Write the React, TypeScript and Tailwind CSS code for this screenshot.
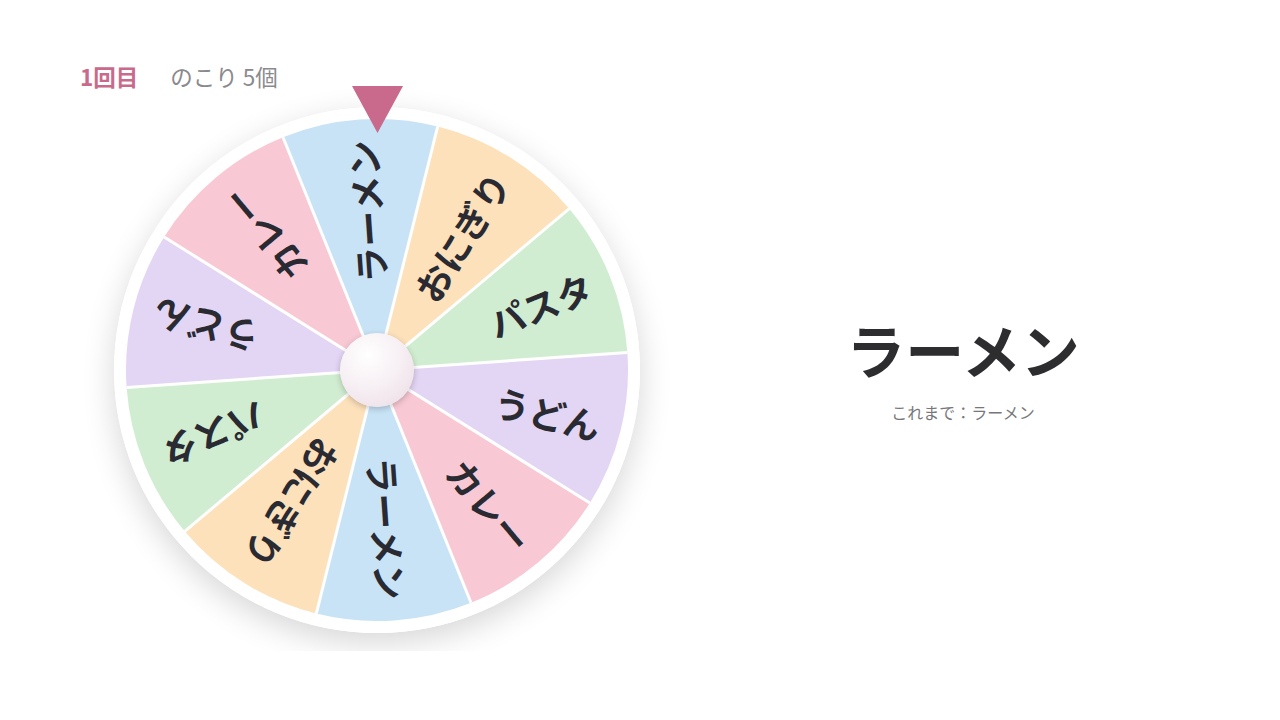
import React from 'react';

const ITEMS = [
  { label: 'ラーメン', color: '#c8e3f6' },
  { label: 'おにぎり', color: '#fde1ba' },
  { label: 'パスタ', color: '#d1edd1' },
  { label: 'うどん', color: '#e3d5f4' },
  { label: 'カレー', color: '#f8c9d5' },
];

const R = 251;
const OFFSET = -4;

const pt = (r: number, deg: number) => {
  const a = (deg * Math.PI) / 180;
  return [r * Math.sin(a), -r * Math.cos(a)];
};

function Wheel() {
  const segs = [...ITEMS, ...ITEMS];
  return (
    <div className="relative w-[526px] h-[526px] rounded-full shadow-[0_10px_32px_rgba(0,0,0,0.16)] ml-[34px]">
      <svg width="526" height="526" viewBox="-263 -263 526 526" className="block">
        <circle cx="0" cy="0" r="263" fill="#ffffff" />
        {segs.map((s, i) => {
          const c = OFFSET + i * 36;
          const [x0, y0] = pt(R, c - 18);
          const [x1, y1] = pt(R, c + 18);
          return <path key={'p' + i} d={`M0,0 L${x0},${y0} A${R},${R} 0 0 1 ${x1},${y1} Z`} fill={s.color} />;
        })}
        {segs.map((_, i) => {
          const [x, y] = pt(R, OFFSET + i * 36 - 18);
          return <line key={'l' + i} x1="0" y1="0" x2={x} y2={y} stroke="#ffffff" strokeWidth="3" />;
        })}
        {segs.map((s, i) => {
          const c = OFFSET + i * 36;
          return (
            <g key={'t' + i} transform={`rotate(${c - 90})`}>
              <text
                x="230"
                y="0"
                textAnchor="end"
                dominantBaseline="central"
                fill="#2a2a32"
                fontSize="36"
                fontWeight="700"
                fontFamily="'Noto Sans CJK JP', sans-serif"
              >
                {s.label}
              </text>
            </g>
          );
        })}
      </svg>
      {/* 中心のつまみ */}
      <div className="absolute left-[226px] top-[226px] w-[74px] h-[74px] rounded-full bg-[radial-gradient(circle_at_38%_30%,#ffffff_0%,#f7f0f4_45%,#eadbe4_100%)] shadow-[0_2px_6px_rgba(0,0,0,0.22)]" />
    </div>
  );
}

export default function App() {
  return (
    <div className="w-[1280px] h-[720px] bg-white flex font-['Noto_Sans_CJK_JP',sans-serif]">
      <div className="w-[646px] shrink-0 pl-20 pt-[64px] flex flex-col">
        <div className="flex items-center gap-8 h-[24px] text-[22.5px] leading-[24px]">
          <span className="font-bold text-[#c96a8c]">1回目</span>
          <span className="text-[#8a8a8e]">のこり 5個</span>
        </div>
        <div className="relative w-[640px] h-[565px] overflow-hidden pt-[21px] -mt-[2px]">
          <svg width="51" height="47" viewBox="0 0 51 47" className="absolute top-0 left-[272px] z-10">
            <polygon points="0,0 51,0 25.5,47" fill="#c96a8c" />
          </svg>
          <Wheel />
        </div>
      </div>
      <div className="flex-1 flex flex-col items-center pt-[311px]">
        <div className="text-[59px] leading-[76px] font-bold text-[#2d2d30]">ラーメン</div>
        <div className="mt-[13px] text-[16px] leading-[24px] text-[#77777b]">これまで：ラーメン</div>
      </div>
    </div>
  );
}
